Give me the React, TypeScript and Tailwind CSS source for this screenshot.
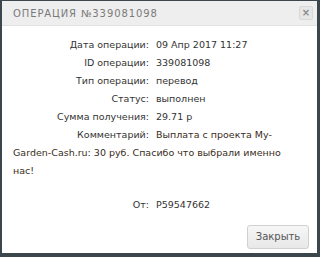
import React from "react";

const rows: [string, string][] = [
  ["Дата операции:", "09 Апр 2017 11:27"],
  ["ID операции:", "339081098"],
  ["Тип операции:", "перевод"],
  ["Статус:", "выполнен"],
  ["Сумма получения:", "29.71 р"],
];

export default function App() {
  return (
    <div
      className="w-[320px] h-[257px] bg-[#3b474d] pt-[1px] pl-[2px] pr-[3px] pb-[4px]"
      style={{ fontFamily: '"DejaVu Sans", sans-serif' }}
    >
      <div className="w-full h-full bg-white flex flex-col">
        <div className="h-[25px] bg-[#eeeeee] border-b border-[#e2e2e2] flex items-center justify-between pl-[11px] pr-[4px]">
          <span className="text-[10px] tracking-[0.9px] text-[#7a7a7a] uppercase">
            Операция №339081098
          </span>
          <button className="w-[14px] h-[14px] rounded-[2px] bg-[#e6e6e6] border border-[#d8d8d8] flex items-center justify-center text-[#8a8a8a] text-[10px] font-bold leading-none">
            ×
          </button>
        </div>
        <div className="flex-1 flex flex-col pl-[11px] pr-[8px] pt-[10px] text-[9.5px] leading-[18px] text-[#333]">
          {rows.map(([l, v]) => (
            <div key={l} className="flex">
              <span className="w-[136px] text-right shrink-0">{l}</span>
              <span className="ml-[7px]">{v}</span>
            </div>
          ))}
          <p className="text-[#3a2c22] pr-[16px]">
            <span className="inline-block w-[136px] text-right text-[#333] mr-[7px]">Комментарий:</span>
            Выплата с проекта My-Garden-Cash.ru: 30 руб. Спасибо что выбрали именно нас!
          </p>
          <div className="mt-[16px] flex">
            <span className="w-[136px] text-right shrink-0">От:</span>
            <span className="ml-[7px]">P59547662</span>
          </div>
          <div className="flex-1" />
          <div className="flex justify-end pb-[4px]">
            <button className="h-[24px] w-[62px] rounded-[3px] border border-[#d0d0d0] bg-gradient-to-b from-[#f6f6f6] to-[#e8e8e8] text-[10px] text-[#555]">
              Закрыть
            </button>
          </div>
        </div>
      </div>
    </div>
  );
}
